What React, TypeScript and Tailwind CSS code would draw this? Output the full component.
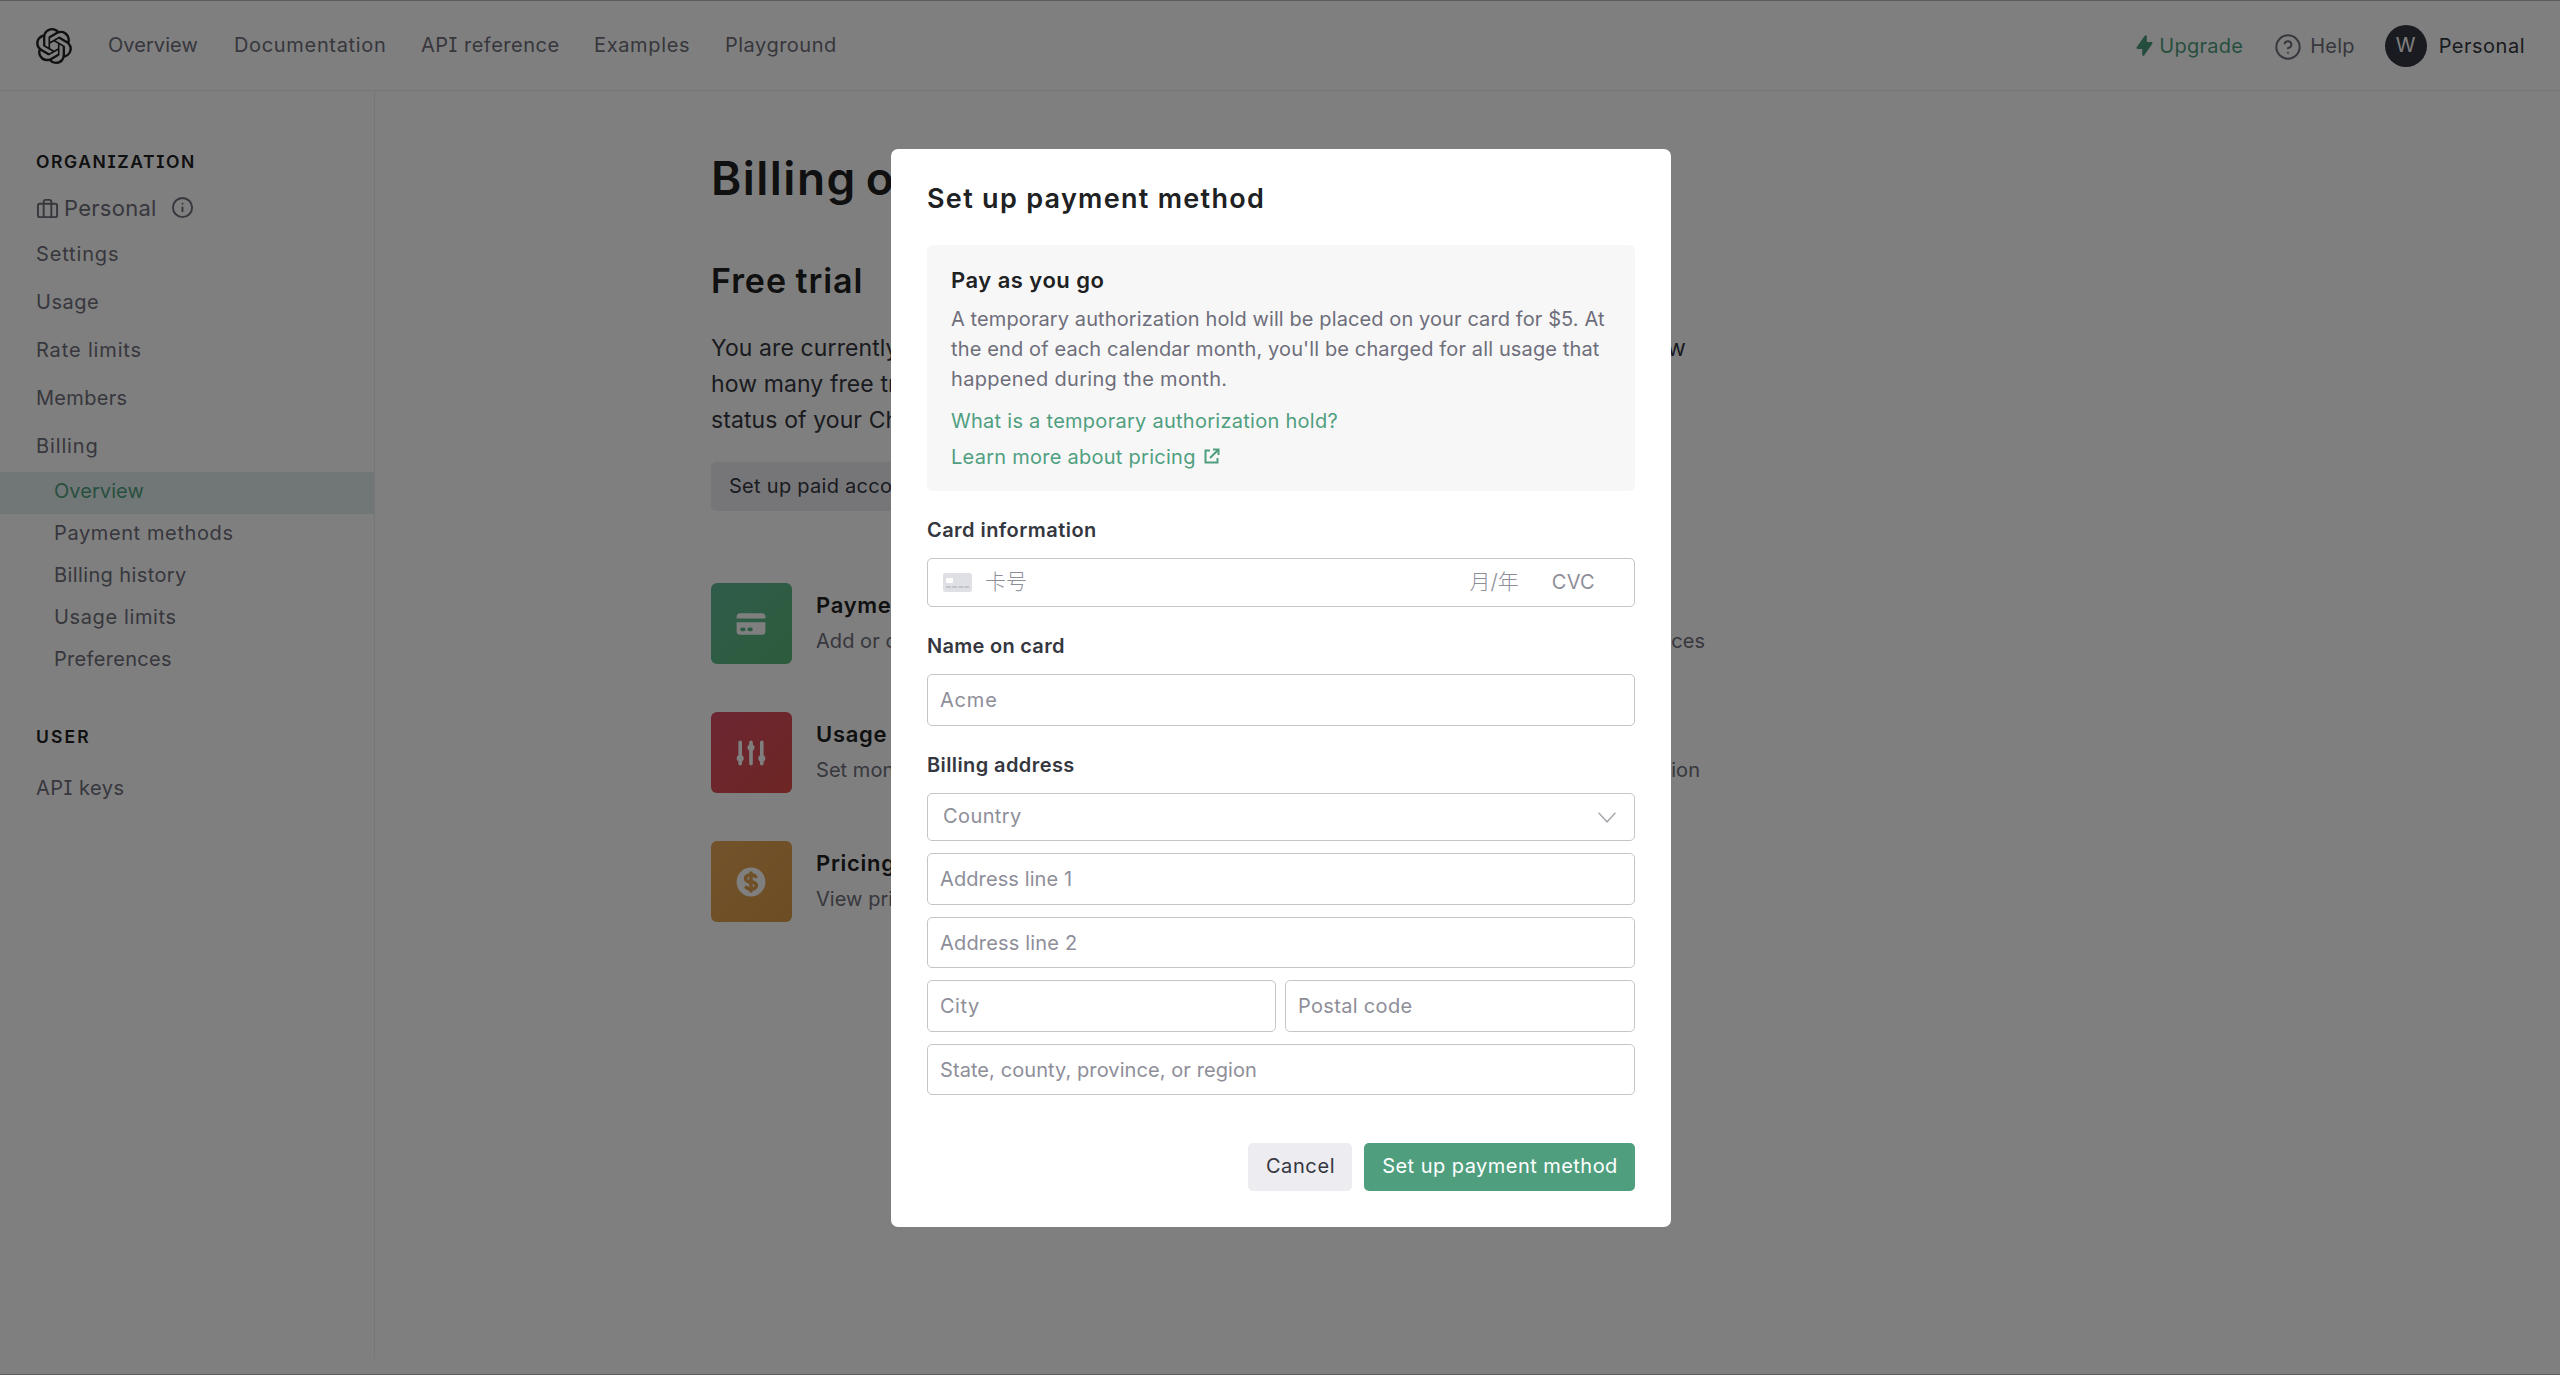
import React from 'react';
import { SiOpenai } from 'react-icons/si';
import { FiBriefcase, FiInfo, FiHelpCircle } from 'react-icons/fi';
import { HiCreditCard, HiAdjustments, HiCurrencyDollar, HiLightningBolt } from 'react-icons/hi';

const field =
  'flex items-center rounded-[5px] border border-[#c4c4ca] bg-white pl-[12px] text-[20px] text-[#8e8e99] whitespace-nowrap';

function Header() {
  return (
    <header className="flex h-[90px] shrink-0 items-center justify-between border-b border-[#eeeef0] pr-[35px] pl-[36px] text-[20px] whitespace-nowrap text-[#6e6e7a]">
      <nav className="flex items-center pb-[1px]">
        <SiOpenai className="mt-[2px] mr-[36px] size-[36px] text-[#202123]" />
        <span className="w-[126px] tracking-[0.05px]">Overview</span>
        <span className="w-[187px] tracking-[0.67px]">Documentation</span>
        <span className="w-[173px] tracking-[0.5px]">API reference</span>
        <span className="w-[131px] tracking-[0.65px]">Examples</span>
        <span className="tracking-[0.5px]">Playground</span>
      </nav>
      <div className="flex items-center">
        <HiLightningBolt className="mr-[3px] size-[23px] text-[#4a9a7a]" />
        <span className="mr-[31px] tracking-[0.27px] text-[#4f9f7f]">Upgrade</span>
        <FiHelpCircle className="mt-[2px] mr-[8px] size-[28px] stroke-[1.7]" />
        <span className="mr-[30px] tracking-[0.21px]">Help</span>
        <span className="mr-[12px] flex size-[42px] items-center justify-center rounded-full bg-[#353740] pb-[2px] text-white">
          W
        </span>
        <span className="tracking-[0.5px] text-[#353740]">Personal</span>
      </div>
    </header>
  );
}

function Sidebar() {
  return (
    <aside className="h-[1268px] w-[375px] shrink-0 border-r border-[#eeeef0] pt-[59px] text-[20px] leading-[48px] whitespace-nowrap text-[#6e6e7a]">
      <h2 className="pl-[36px] text-[17.5px] leading-6 font-semibold tracking-[1.6px] text-[#202123]">ORGANIZATION</h2>
      <div className="mt-3 flex h-11 items-center pl-[36px] text-[22px] leading-[44px] tracking-[0.26px]">
        <FiBriefcase className="mr-[5px] size-[23px] stroke-2" />
        Personal
        <FiInfo className="mb-[1px] ml-[14px] size-[23px] stroke-2" />
      </div>
      <div className="flex flex-col pl-[36px]">
        <span className="tracking-[0.85px]">Settings</span>
        <span className="tracking-[0.52px]">Usage</span>
        <span className="tracking-[0.85px]">Rate limits</span>
        <span className="tracking-[0.3px]">Members</span>
        <span className="tracking-[0.87px]">Billing</span>
      </div>
      <div className="mt-[2px] flex flex-col leading-[39px]">
        <span className="h-[42px] bg-[#e3efed] pl-[54px] tracking-[0.05px] text-[#4f9f7f]">Overview</span>
        <span className="h-[42px] pl-[54px] tracking-[0.61px]">Payment methods</span>
        <span className="h-[42px] pl-[54px] tracking-[0.39px]">Billing history</span>
        <span className="h-[42px] pl-[54px] tracking-[0.63px]">Usage limits</span>
        <span className="h-[42px] pl-[54px] tracking-[0.31px]">Preferences</span>
      </div>
      <h2 className="mt-[43px] pl-[36px] text-[17.5px] leading-6 font-semibold tracking-[2.1px] text-[#202123]">USER</h2>
      <div className="mt-[15px] pl-[36px] tracking-[0.5px]">API keys</div>
    </aside>
  );
}

function Tile({ tone, icon }: { tone: string; icon: React.ReactNode }) {
  return (
    <span className={`flex size-[81px] shrink-0 items-center justify-center rounded-[6px] bg-linear-to-br pr-[1px] text-white ${tone}`}>
      {icon}
    </span>
  );
}

function Entry({ tone, icon, title, text }: { tone: string; icon: React.ReactNode; title: string; text: string }) {
  return (
    <div className="flex gap-[24px]">
      <Tile tone={tone} icon={icon} />
      <div className="pt-[8px] whitespace-nowrap">
        <div className="text-[22px] leading-[28px] font-semibold tracking-[0.7px] text-[#202123]">{title}</div>
        <div className="mt-[7px] text-[20px] leading-[30px] tracking-[0.05px] text-[#6e6e7a]">{text}</div>
      </div>
    </div>
  );
}

function Main() {
  return (
    <main className="pt-[59px] pl-[336px] text-[#353740]">
      <h1 className="text-[46px] leading-[56px] font-semibold tracking-[1.48px] text-[#202123] [word-spacing:-4px]">Billing overview</h1>
      <h2 className="mt-[55px] text-[34px] leading-[40px] font-semibold tracking-[0.95px] text-[#202123] [word-spacing:-1px]">Free trial</h2>
      <div className="mt-[29px] flex w-[975px] flex-col text-[23px] leading-[36px] tracking-[0.1px] whitespace-nowrap">
        <div className="flex justify-between">
          <span>You are currently</span>
          <span>view</span>
        </div>
        <span>how many free trial</span>
        <span>status of your ChatGPT</span>
      </div>
      <div className="mt-[24px] flex">
        <span className="flex h-[49px] items-center rounded-[5px] bg-[#ececf1] px-[18px] pb-[1px] text-[20px] tracking-[0.28px]">
          Set up paid account
        </span>
      </div>
      <div className="mt-[72px] flex w-[994px] justify-between">
        <div className="flex flex-col gap-[48px]">
          <Entry
            tone="from-[#5fb896] to-[#58b878]"
            icon={<HiCreditCard className="size-[36px]" />}
            title="Payment methods"
            text="Add or change payment method"
          />
          <Entry
            tone="from-[#d84c64] to-[#dc4c46]"
            icon={<HiAdjustments className="size-[36px]" />}
            title="Usage limits"
            text="Set monthly spend limits"
          />
          <Entry
            tone="from-[#e6a656] to-[#d89a48]"
            icon={<HiCurrencyDollar className="size-[36px]" />}
            title="Pricing"
            text="View pricing"
          />
        </div>
        <div className="flex flex-col items-end gap-[48px]">
          <Entry
            tone="from-[#5fa0dc] to-[#4f88d0]"
            icon={<HiCreditCard className="size-[36px]" />}
            title="Billing history"
            text="View past and current invoices"
          />
          <div className="pr-[5px]">
            <Entry
              tone="from-[#9f7fdc] to-[#8a68d0]"
              icon={<HiAdjustments className="size-[36px]" />}
              title="Preferences"
              text="Manage billing information"
            />
          </div>
        </div>
      </div>
    </main>
  );
}

function CardGlyph() {
  return (
    <svg viewBox="0 0 29 19" className="h-[19px] w-[29px]">
      <rect width="29" height="19" rx="2.5" fill="#dfdfe6" />
      <rect x="3" y="5" width="7" height="5" rx="1" fill="#fff" />
      <path d="M3 14h5M9.200 14h5M15.400 14h5M21.600 14h4.500" stroke="#b9b9c2" strokeWidth="1.600" />
    </svg>
  );
}

function Modal() {
  return (
    <section className="mt-[148px] h-[1078px] w-[780px] rounded-[7px] bg-white px-[36px] pt-[32px] pb-[36px]">
      <h2 className="text-[27px] leading-[36px] font-semibold tracking-[1.3px] text-[#202123]">Set up payment method</h2>

      <div className="mt-[28px] h-[246px] rounded-[6px] bg-[#f7f7f8] px-[24px] pt-[21px] text-[20px] leading-[30px] whitespace-nowrap text-[#6e6e7a]">
        <h3 className="text-[22px] leading-[28px] font-semibold tracking-[0.48px] text-[#202123]">Pay as you go</h3>
        <p className="mt-[10px] flex flex-col">
          <span className="tracking-[0.1px]">A temporary authorization hold will be placed on your card for $5. At</span>
          <span className="tracking-[0.13px]">the end of each calendar month, you&apos;ll be charged for all usage that</span>
          <span className="tracking-[0.32px]">happened during the month.</span>
        </p>
        <div className="mt-[9px] flex flex-col leading-[36px] text-[#4f9f7f]">
          <span className="tracking-[0.27px]">What is a temporary authorization hold?</span>
          <span className="flex items-center tracking-[0.26px]">
            Learn more about pricing
            <svg viewBox="0 0 16 16" className="mb-[3px] ml-[8px] size-[16px] fill-none stroke-current stroke-2">
              <path d="M6 2.500H1.500V14.500H13.500V10M9 1.500h5.500V7M14.500 1.500L6 10" />
            </svg>
          </span>
        </div>
      </div>

      <div className="mt-[27px] text-[20px] leading-[24px] font-semibold tracking-[0.45px] text-[#353740]">Card information</div>
      <div className={`${field} mt-[16px] h-[49px]`}>
        <span className="flex w-full items-center pl-[3px] font-['Inter','Noto_Sans_CJK_SC',sans-serif]">
          <CardGlyph />
          <span className="ml-[13px] pb-[2px] text-[21px] font-light">卡号</span>
          <span className="mr-[33px] ml-auto pb-[2px] text-[21px] font-light">月/年</span>
          <span className="mr-[39px] pb-[1px] tracking-[0.3px]">CVC</span>
        </span>
      </div>

      <div className="mt-[27px] text-[20px] leading-[24px] font-semibold tracking-[0.28px] text-[#353740]">Name on card</div>
      <div className={`${field} mt-[16px] h-[52px] tracking-[0.8px]`}>Acme</div>

      <div className="mt-[27px] text-[20px] leading-[24px] font-semibold tracking-[0.4px] text-[#353740]">Billing address</div>
      <div className={`${field} mt-[16px] h-[48px] justify-between pr-[18px] tracking-[0.4px]`}>
        <span className="pb-[2px] pl-[3px]">Country</span>
        <svg viewBox="0 0 18 11" className="h-[11px] w-[18px] fill-none stroke-[#a8a8b0]" strokeWidth="1.500">
          <path d="M0.500 0.800L9 9.800L17.500 0.800" />
        </svg>
      </div>
      <div className={`${field} mt-[12px] h-[52px] tracking-[0.1px]`}>Address line 1</div>
      <div className={`${field} mt-[12px] h-[51px] tracking-[0.18px]`}>Address line 2</div>
      <div className="mt-[12px] flex gap-[9px]">
        <div className={`${field} h-[52px] w-[349px] tracking-[0.5px]`}>City</div>
        <div className={`${field} h-[52px] w-[350px] tracking-[0.33px]`}>Postal code</div>
      </div>
      <div className={`${field} mt-[12px] h-[51px] tracking-[0.08px]`}>State, county, province, or region</div>

      <div className="mt-[48px] flex h-[48px] justify-end gap-[12px] text-[20px] whitespace-nowrap">
        <div className="flex w-[104px] items-center justify-center rounded-[5px] bg-[#ececf1] pb-[2px] pl-[1px] tracking-[0.6px] text-[#353740]">
          Cancel
        </div>
        <div className="flex w-[271px] items-center justify-center rounded-[5px] bg-[#4f9f7f] pb-[2px] pl-[1px] tracking-[0.46px] text-white">
          Set up payment method
        </div>
      </div>
    </section>
  );
}

export default function App() {
  return (
    <div className="relative h-[1375px] w-[2560px] overflow-hidden border-y border-[#5c5c5c] bg-white font-['Inter',sans-serif] [font-feature-settings:'cv08'_1]">
      <div className="flex h-full flex-col">
        <Header />
        <div className="flex">
          <Sidebar />
          <Main />
        </div>
      </div>
      <div className="absolute inset-0 flex items-start bg-black/50 pl-[891px]">
        <Modal />
      </div>
    </div>
  );
}
